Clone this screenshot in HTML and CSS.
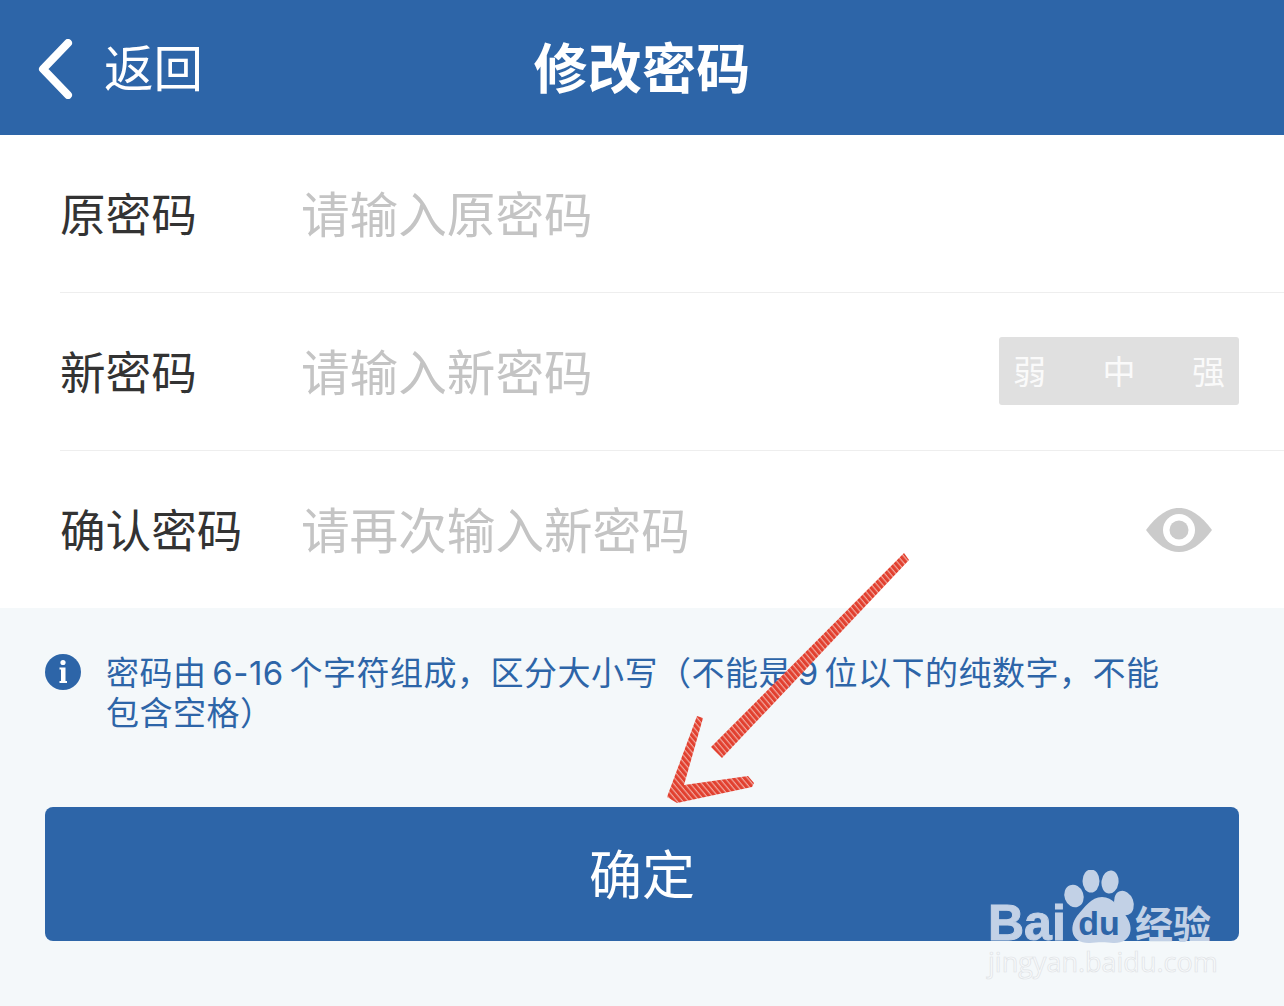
FILE: index.html
```html
<!DOCTYPE html>
<html lang="zh-CN">
<head>
  <meta charset="UTF-8" />
  <title>修改密码</title>
  <link rel="stylesheet" href="styles.css">
</head>
<body>

  <div class="page">
    <header class="topbar">
      <a class="back">
        <svg class="chevron" width="36" height="60" viewBox="0 0 36 60">
          <path d="M30 4 L5 30 L30 56" fill="none" stroke="#fff" stroke-width="8" stroke-linecap="round" stroke-linejoin="round" />
        </svg>
        <span>返回</span>
      </a>
      <h1>修改密码</h1>
    </header>

    <form class="fields">
      <div class="row">
        <label>原密码</label>
        <span class="hint">请输入原密码</span>
      </div>
      <div class="row">
        <label>新密码</label>
        <span class="hint">请输入新密码</span>
        <div class="strength"><span>弱</span><span>中</span><span>强</span></div>
      </div>
      <div class="row last">
        <label>确认密码</label>
        <span class="hint">请再次输入新密码</span>
        <svg class="eye" width="68" height="44" viewBox="0 0 68 44">
          <path d="M1 22 C12 7 23 0 34 0 C45 0 56 7 67 22 C56 37 45 44 34 44 C23 44 12 37 1 22 Z" fill="#cbcbcb" />
          <circle cx="34" cy="22" r="16" fill="#fff" />
          <circle cx="34" cy="22" r="9.5" fill="#cbcbcb" />
        </svg>
      </div>
    </form>

    <section class="notice">
      <svg class="info" width="36" height="36" viewBox="0 0 36 36">
        <circle cx="18" cy="18" r="18" fill="#2d65a8" />
        <circle cx="18" cy="8.5" r="2.6" fill="#fff" />
        <path d="M14.5 13.5 H20.5 V27 H22 V29 H14.5 V27 H16 V15.5 H14.5 Z" fill="#fff" />
      </svg>
      <p>密码由 6-16 个字符组成，区分大小写（不能是 9 位以下的纯数字，不能包含空格）</p>
    </section>

    <button type="button" class="submit">确定</button>
  </div>

  <!-- red arrow drawn on top of the screenshot -->
  <svg class="arrow" width="1284" height="1006" viewBox="0 0 1284 1006">
    <defs>
      <pattern id="hatch" width="4.3" height="4.3" patternUnits="userSpaceOnUse" patternTransform="rotate(-40)">
        <rect width="4.3" height="4.3" fill="#f0a8a0" />
        <rect width="3.1" height="4.3" fill="#e2402f" />
      </pattern>
    </defs>
    <path class="stroke" d="M904 553 L909 560 L722 758 L711 747 Z" />
    <path class="stroke" d="M697 716 L703 718 L684 785 L748 776 L754 783 L752 787 L677 803 L667 797 Z" />
  </svg>

  <!-- baidu jingyan watermark -->
  <svg class="mark" width="260" height="120" viewBox="0 0 260 120">
    <g class="paw">
      <ellipse cx="92" cy="26" rx="9.5" ry="11.5" transform="rotate(-20 92 26)" />
      <ellipse cx="109" cy="11" rx="8.5" ry="11.5" />
      <ellipse cx="128" cy="12" rx="8.5" ry="11.5" transform="rotate(8 128 12)" />
      <ellipse cx="142" cy="33" rx="9.5" ry="12.5" transform="rotate(-20 142 33)" />
      <path d="M120 27 C131 27 137 37 144 46 C153 58 149 74 131 73 C125 72 115 72 108 73 C90 74 86 58 95 46 C103 37 109 27 120 27 Z" />
    </g>
    <text class="mark-bai" x="6" y="70">Bai</text>
    <text class="mark-du" x="117" y="65">du</text>
    <text class="mark-cn" x="153" y="68">经验</text>
    <text class="mark-url" x="6" y="102">jingyan.baidu.com</text>
  </svg>

</body>
</html>
```

FILE: styles.css
```css
html, body { margin: 0; padding: 0; }
body { width: 1284px; height: 1006px; overflow: hidden; position: relative; background: #f4f8fa; font-family: "Liberation Sans", "Noto Sans CJK SC", sans-serif; }

.page { display: flex; flex-direction: column; height: 1006px; }

.topbar { display: grid; grid-template-columns: 1fr auto 1fr; align-items: center; height: 135px; padding-top: 5px; box-sizing: border-box; background: #2d65a8; color: #fff; }
.topbar h1 { margin: 0; font-size: 54px; font-weight: 700; line-height: 1; letter-spacing: 0.3px; }
.back { display: flex; align-items: center; gap: 30px; padding-left: 38px; font-size: 49.5px; font-weight: 400; line-height: 1; }
.chevron { display: block; flex: none; margin-top: -3px; }

.fields { background: #fff; padding-left: 60px; }
.row { display: flex; align-items: center; height: 157px; border-bottom: 1px solid #eeeeee; }
.row.last { height: 157px; border-bottom: none; }
.row label { width: 241px; flex: none; padding-bottom: 3px; font-size: 45.6px; color: #333; }
.hint { padding-bottom: 4px; font-size: 48.6px; color: #c4c4c4; }

.strength { display: flex; justify-content: space-between; width: 240px; height: 68px; margin-left: auto; margin-right: 45px; margin-bottom: 2px; padding: 0 14px 2px; box-sizing: border-box; align-items: center; background: #e0e0e0; border-radius: 3px; color: #fafafa; font-size: 33px; }
.eye { margin-left: auto; margin-right: 71px; }

.notice { display: flex; align-items: flex-start; gap: 25px; padding: 45px 45px 0; height: 199px; box-sizing: border-box; color: #2d65a8; }
.info { flex: none; margin-top: 1px; }
.notice p { margin: 0; width: 1068px; font-family: Inter, "Noto Sans CJK SC", sans-serif; font-size: 33px; line-height: 40px; word-spacing: -4px; letter-spacing: 0.5px; }

.submit { display: block; width: 1194px; height: 134px; margin: 0 45px; padding: 0 0 4px; border: none; border-radius: 8px; background: #2d65a8; color: #fff; font-family: inherit; font-size: 53px; }

.arrow { position: absolute; left: 0; top: 0; pointer-events: none; }
.stroke { fill: url(#hatch); }
.mark { position: absolute; left: 982px; top: 870px; pointer-events: none; }
.paw { fill: #c2d1e6; }
.mark-bai { font-family: "Liberation Sans", sans-serif; font-size: 50px; font-weight: 700; fill: #c2d1e6; stroke: #c2d1e6; stroke-width: 1px; }
.mark-du { font-family: "Liberation Sans", sans-serif; font-size: 34px; font-weight: 700; fill: #2d65a8; text-anchor: middle; }
.mark-cn { font-family: "Noto Sans CJK SC", sans-serif; font-size: 38px; font-weight: 700; fill: #c2d1e6; }
.mark-url { font-family: "Open Sans", sans-serif; font-size: 27px; fill: #f8fafb; stroke: #dfe3e6; stroke-width: 0.7px; }
```
